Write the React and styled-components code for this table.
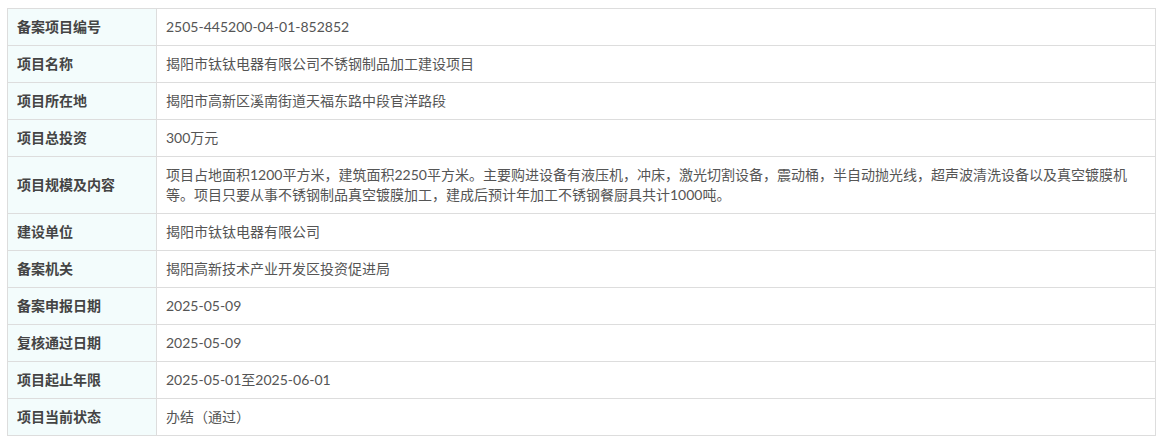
import React from "react";
import styled, { createGlobalStyle } from "styled-components";

const GlobalStyle = createGlobalStyle`
  body {
    margin: 0;
    background-color: #ffffff;
    font-family: "Lato", "Noto Sans CJK SC", sans-serif;
  }
`;

const Wrapper = styled.div`
  padding: 8px 10px 0 7px;
`;

const Table = styled.table`
  width: 1149px;
  border-collapse: collapse;
  font-size: 14px;
  line-height: 20px;
`;

const Label = styled.th`
  width: 130px;
  padding: 8px 9px;
  border: 1px solid #dddddd;
  background-color: #f3fcfc;
  color: #444444;
  font-weight: bold;
  text-align: left;
  vertical-align: middle;
`;

const Value = styled.td`
  padding: 8px 9px;
  border: 1px solid #dddddd;
  color: #555555;
  text-align: left;
  vertical-align: middle;
`;

const rows = [
  ["备案项目编号", "2505-445200-04-01-852852"],
  ["项目名称", "揭阳市钛钛电器有限公司不锈钢制品加工建设项目"],
  ["项目所在地", "揭阳市高新区溪南街道天福东路中段官洋路段"],
  ["项目总投资", "300万元"],
  [
    "项目规模及内容",
    "项目占地面积1200平方米，建筑面积2250平方米。主要购进设备有液压机，冲床，激光切割设备，震动桶，半自动抛光线，超声波清洗设备以及真空镀膜机等。项目只要从事不锈钢制品真空镀膜加工，建成后预计年加工不锈钢餐厨具共计1000吨。",
  ],
  ["建设单位", "揭阳市钛钛电器有限公司"],
  ["备案机关", "揭阳高新技术产业开发区投资促进局"],
  ["备案申报日期", "2025-05-09"],
  ["复核通过日期", "2025-05-09"],
  ["项目起止年限", "2025-05-01至2025-06-01"],
  ["项目当前状态", "办结（通过）"],
];

const App = () => {
  return (
    <Wrapper>
      <GlobalStyle />
      <Table>
        <tbody>
          {rows.map(([label, value]) => (
            <tr key={label}>
              <Label>{label}</Label>
              <Value>{value}</Value>
            </tr>
          ))}
        </tbody>
      </Table>
    </Wrapper>
  );
};

export default App;
